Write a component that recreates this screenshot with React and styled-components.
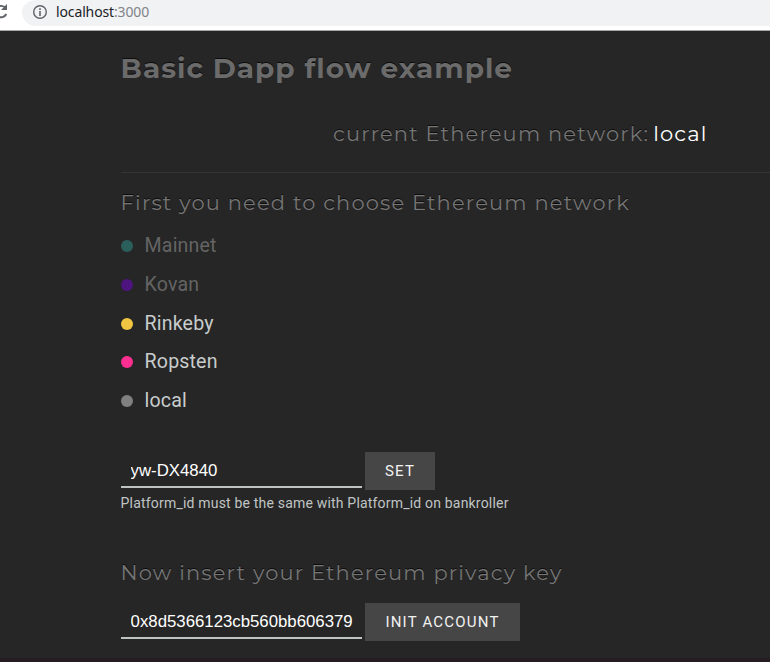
import React from 'react';
import styled, { createGlobalStyle } from 'styled-components';

const Global = createGlobalStyle`
  * { box-sizing: border-box; }
  body { margin: 0; background: #262626; overflow: hidden; }
`;
const Screen = styled.div`
  width: 770px;
  height: 662px;
  display: flex;
  flex-direction: column;
  overflow: hidden;
  background: #262626;
  font-family: Roboto, sans-serif;
`;
const BrowserBar = styled.header`
  height: 31px;
  flex: none;
  display: flex;
  align-items: flex-start;
  background: #fff;
  border-bottom: 1px solid #a8a8a8;
`;
const ReloadIcon = styled.svg`
  width: 22px;
  height: 26px;
  flex: none;
`;
const AddressField = styled.div`
  flex: 1;
  height: 26px;
  padding: 0 0 2px 10px;
  display: flex;
  align-items: center;
  gap: 8px;
  background: #f0f2f4;
  border-radius: 14px 0 0 14px / 12px 0 0 14px;
`;
const InfoIcon = styled.svg`
  width: 16px;
  height: 16px;
`;
const Url = styled.span`
  font: 14px/20px "Noto Sans", "Open Sans", sans-serif;
  letter-spacing: -0.13px;
  color: #202124;
  white-space: pre;
`;
const Port = styled.span`
  color: #808488;
`;
const Content = styled.main`
  flex: 1;
  padding-left: 120.6px;
  display: flex;
  flex-direction: column;
`;
const Title = styled.h1`
  margin: 20px 0 0;
  font: 700 28px/34px Montserrat, Inter, sans-serif;
  letter-spacing: 0.95px;
  color: #6b6b6b;
  text-shadow: 0 -1px 0 #0c0c0c;
  white-space: nowrap;
`;
const Heading = styled.h2`
  margin: 0;
  font: 400 21px/28px Montserrat, Inter, sans-serif;
  letter-spacing: 1.17px;
  color: #767676;
  text-shadow: 0 -1px 0 #0c0c0c;
  white-space: nowrap;
`;
const CurrentNetwork = styled.div`
  height: 88px;
  padding: 35px 0 0 212.4px;
  display: flex;
  gap: 4px;
  border-bottom: 1px solid #343434;
`;
const NetworkName = styled.strong`
  font: 400 21px/28px Montserrat, Inter, sans-serif;
  letter-spacing: 1.17px;
  color: #fff;
`;
const NetworkSection = styled.section`
  height: 279px;
  padding-top: 16px;
`;
const NetworkList = styled.ul`
  margin: 9.2px 0 0;
  padding: 0;
  list-style: none;
`;
const NetworkItem = styled.li`
  height: 38.75px;
  display: flex;
  align-items: center;
  gap: 12px;
  font-size: 19.6px;
  letter-spacing: 0.15px;
  color: ${(p) => (p.$disabled ? '#646464' : '#c8cccc')};
`;
const Dot = styled.i`
  width: 12px;
  height: 12px;
  margin-top: 1px;
  border-radius: 50%;
  background: ${(p) => p.$color};
`;
const FormRow = styled.form`
  display: flex;
  gap: 3px;
  height: 38px;
  align-items: flex-start;
`;
const TextInput = styled.input`
  width: 241px;
  height: 36px;
  padding: 3px 9px 0 10px;
  border: 0;
  border-bottom: 2px solid #c0c3c3;
  border-radius: 0;
  outline: 0;
  background: transparent;
  color: #fff;
  font: 16.8px "Liberation Sans", sans-serif;
`;
const Button = styled.button`
  width: ${(p) => p.$width}px;
  height: 38px;
  padding: 0 0 0 0.8px;
  border: 0;
  background: #464646;
  color: #f2f2f2;
  font: 400 15px Roboto, sans-serif;
  letter-spacing: 1.2px;
`;
const Hint = styled.p`
  height: 27px;
  margin: 4px 0 0;
  font-size: 14px;
  line-height: 18px;
  letter-spacing: 0.19px;
  color: #c0c4c4;
`;
const KeySection = styled.section`
  padding-top: 38px;
  display: flex;
  flex-direction: column;
  gap: 16px;
`;
const Footer = styled.footer`
  height: 4px;
  flex: none;
  background: #261d22;
`;

const networks = [
  { name: 'Mainnet', color: '#2b5f5b', disabled: true },
  { name: 'Kovan', color: '#4e1480', disabled: true },
  { name: 'Rinkeby', color: '#efc541' },
  { name: 'Ropsten', color: '#ff2f92' },
  { name: 'local', color: '#808080' },
];

export default function App() {
  return (
    <Screen>
      <Global />
      <BrowserBar>
        <ReloadIcon viewBox="0 0 22 26" fill="none">
          <path d="M5.6 8A5.7 5.7 0 1 0 6.3 14" stroke="#5f6368" strokeWidth="1.9" />
          <path d="M7 4v6H1z" fill="#5f6368" />
        </ReloadIcon>
        <AddressField>
          <InfoIcon viewBox="0 0 16 16" fill="none">
            <circle cx="8" cy="8" r="6.3" stroke="#5f6368" strokeWidth="1.4" />
            <path d="M8 4.2v1.7M8 7v5" stroke="#5f6368" strokeWidth="1.6" />
          </InfoIcon>
          <Url>localhost<Port>:3000</Port></Url>
        </AddressField>
      </BrowserBar>
      <Content>
        <Title>Basic Dapp flow example</Title>
        <CurrentNetwork>
          <Heading>current Ethereum network:</Heading>
          <NetworkName>local</NetworkName>
        </CurrentNetwork>
        <NetworkSection>
          <Heading>First you need to choose Ethereum network</Heading>
          <NetworkList>
            {networks.map((n) => (
              <NetworkItem key={n.name} $disabled={n.disabled}>
                <Dot $color={n.color} />
                {n.name}
              </NetworkItem>
            ))}
          </NetworkList>
        </NetworkSection>
        <FormRow>
          <TextInput defaultValue="yw-DX4840" />
          <Button type="button" $width={70}>SET</Button>
        </FormRow>
        <Hint>Platform_id must be the same with Platform_id on bankroller</Hint>
        <KeySection>
          <Heading>Now insert your Ethereum privacy key</Heading>
          <FormRow>
            <TextInput defaultValue="0x8d5366123cb560bb606379" />
            <Button type="button" $width={155}>INIT ACCOUNT</Button>
          </FormRow>
        </KeySection>
      </Content>
      <Footer />
    </Screen>
  );
}
